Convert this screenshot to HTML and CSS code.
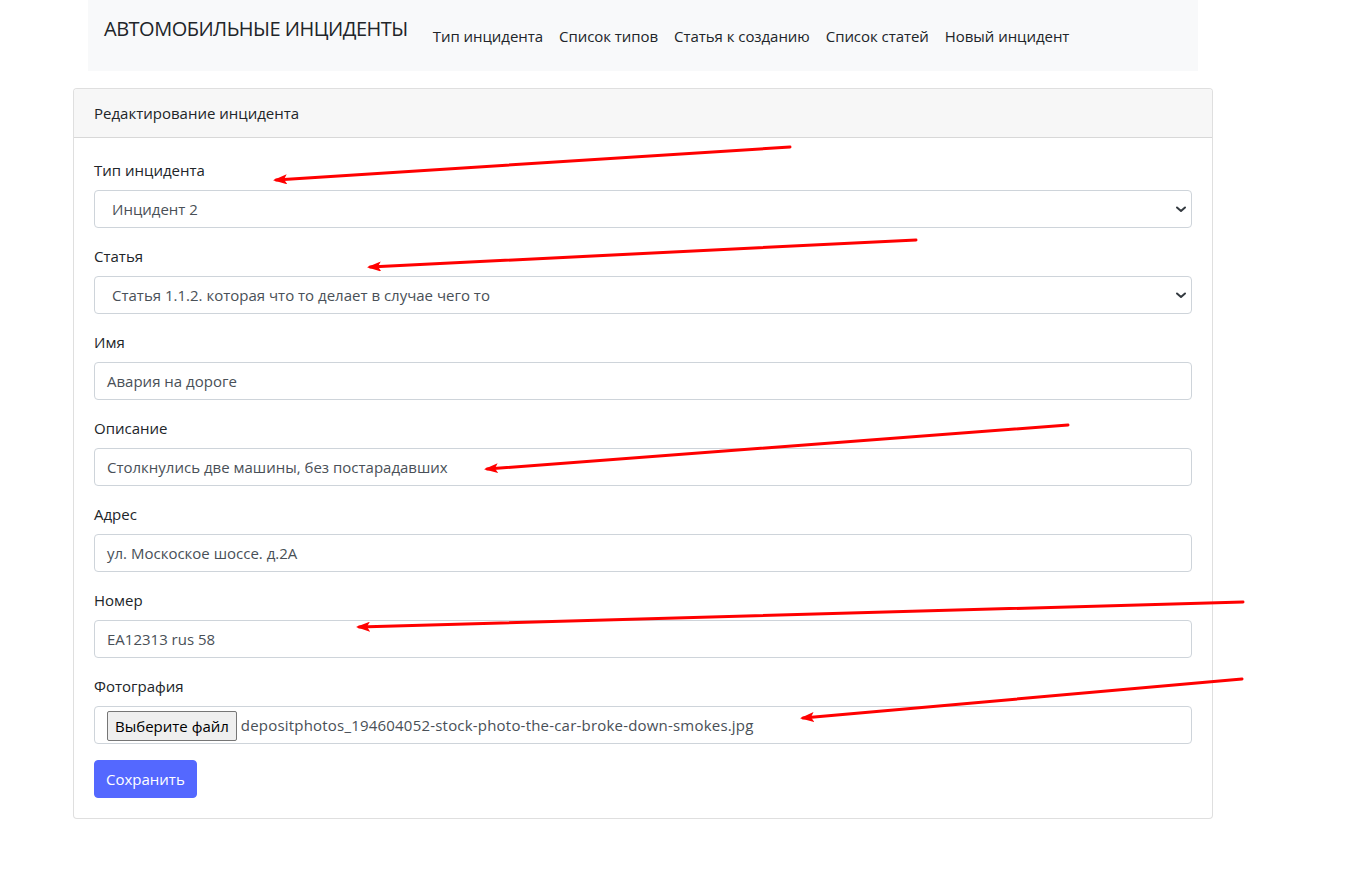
FILE: index.html
```html
<!DOCTYPE html>
<html lang="ru">
<head>
<meta charset="utf-8">
<title>Редактирование инцидента</title>
<link rel="stylesheet" href="styles.css">
</head>
<body>
<div class="wrap">
  <nav class="navbar">
    <a class="brand" href="#">АВТОМОБИЛЬНЫЕ ИНЦИДЕНТЫ</a>
    <ul class="nav">
      <li><a href="#">Тип инцидента</a></li>
      <li><a href="#">Список типов</a></li>
      <li><a href="#">Статья к созданию</a></li>
      <li><a href="#">Список статей</a></li>
      <li><a href="#">Новый инцидент</a></li>
    </ul>
  </nav>
  <div class="card">
    <div class="card-header">Редактирование инцидента</div>
    <form class="card-body">
      <div class="group">
        <label class="label">Тип инцидента</label>
        <div class="control select">Инцидент 2<svg class="chev" width="16" height="16" viewBox="0 0 16 16"><path d="M4 6.5 L8 10 L12 6.5" fill="none" stroke="#343a40" stroke-width="2" stroke-linecap="round" stroke-linejoin="round"/></svg></div>
      </div>
      <div class="group">
        <label class="label">Статья</label>
        <div class="control select">Статья 1.1.2. которая что то делает в случае чего то<svg class="chev" width="16" height="16" viewBox="0 0 16 16"><path d="M4 6.5 L8 10 L12 6.5" fill="none" stroke="#343a40" stroke-width="2" stroke-linecap="round" stroke-linejoin="round"/></svg></div>
      </div>
      <div class="group">
        <label class="label">Имя</label>
        <div class="control">Авария на дороге</div>
      </div>
      <div class="group">
        <label class="label">Описание</label>
        <div class="control">Столкнулись две машины, без постарадавших</div>
      </div>
      <div class="group">
        <label class="label">Адрес</label>
        <div class="control">ул. Москоское шоссе. д.2А</div>
      </div>
      <div class="group">
        <label class="label">Номер</label>
        <div class="control">EA12313 rus 58</div>
      </div>
      <div class="group">
        <label class="label">Фотография</label>
        <div class="control file"><span class="file-btn">Выберите файл</span><span class="file-name">depositphotos_194604052-stock-photo-the-car-broke-down-smokes.jpg</span></div>
      </div>
      <button type="button" class="btn">Сохранить</button>
    </form>
  </div>
</div>
<svg class="arrows" width="1358" height="882" viewBox="0 0 1358 882">
  <defs>
    <marker id="ah" markerWidth="14" markerHeight="10" refX="11" refY="5" orient="auto" markerUnits="userSpaceOnUse">
      <path d="M0 0 L14 5 L0 10 L3 5 Z" fill="#ff0000"/>
    </marker>
  </defs>
  <g stroke="#ff0000" stroke-width="3" fill="none" stroke-linecap="round">
    <line x1="790" y1="147" x2="276" y2="180" marker-end="url(#ah)"/>
    <line x1="916" y1="240" x2="370" y2="267" marker-end="url(#ah)"/>
    <line x1="1068" y1="425" x2="487" y2="469" marker-end="url(#ah)"/>
    <line x1="1243" y1="602" x2="359" y2="627" marker-end="url(#ah)"/>
    <line x1="1242" y1="679" x2="803" y2="718" marker-end="url(#ah)"/>
  </g>
</svg>
</body>
</html>
```
FILE: styles.css
```css
* { box-sizing: border-box; }
html, body { margin: 0; padding: 0; }
body {
  font-family: "Open Sans", "Noto Sans", "Liberation Sans", sans-serif;
  font-size: 16px;
  line-height: 24px;
  color: #212529;
  background: #fff;
  position: relative;
  min-height: 882px;
}
a { text-decoration: none; color: inherit; }
.wrap {
  width: 1140px;
  margin-left: 73px;
}
.navbar {
  margin: 0 15px 17px;
  height: 71px;
  background: #f8f9fa;
  display: flex;
  align-items: flex-start;
  padding: 0 16px;
}
.brand {
  font-size: 20px;
  line-height: 30px;
  margin-top: 14px;
  color: #212529;
  letter-spacing: -0.5px;
  margin-right: 17px;
}
.nav {
  list-style: none;
  margin: 24px 0 0;
  padding: 0;
  display: flex;
}
.nav a {
  display: block;
  padding: 0 8px;
  color: #212529;
  font-size: 15px;
  line-height: 24px;
  letter-spacing: -0.05px;
}
.card {
  border: 1px solid rgba(0,0,0,.125);
  border-radius: 4px;
  background: #fff;
}
.card-header {
  background: #f7f7f7;
  border-bottom: 1px solid rgba(0,0,0,.125);
  padding: 12px 20px;
  font-size: 15px;
  line-height: 24px;
  border-radius: 3px 3px 0 0;
}
.card-body {
  padding: 20px;
  display: flex;
  flex-direction: column;
  align-items: flex-start;
}
.group {
  width: 100%;
  margin-bottom: 16px;
}
.label {
  display: block;
  margin-bottom: 8px;
  font-size: 15px;
}
.control {
  height: 38px;
  border: 1px solid #ced4da;
  border-radius: 4px;
  padding: 6px 12px;
  color: #495057;
  font-size: 15px;
  line-height: 24px;
  background: #fff;
  display: flex;
  align-items: center;
}
.select {
  padding-left: 17px;
  justify-content: space-between;
  padding-right: 2px;
}
.chev { flex: none; }
.file {
  padding: 0 12px;
  gap: 4px;
}
.file-btn {
  font-size: 15px;
  line-height: 22px;
  color: #000;
  background: #efefef;
  border: 1px solid #767676;
  border-radius: 2px;
  padding: 3px 7px;
  margin-top: 1px;
}
.file-name {
  color: #495057;
  letter-spacing: 0.2px;
}
.btn {
  font-family: inherit;
  font-size: 15px;
  line-height: 24px;
  color: #fff;
  background: #5468ff;
  border: 1px solid #5468ff;
  border-radius: 4px;
  padding: 6px 11px;
  height: 38px;
  cursor: pointer;
}
.arrows {
  position: absolute;
  top: 0;
  left: 0;
  pointer-events: none;
}
```
